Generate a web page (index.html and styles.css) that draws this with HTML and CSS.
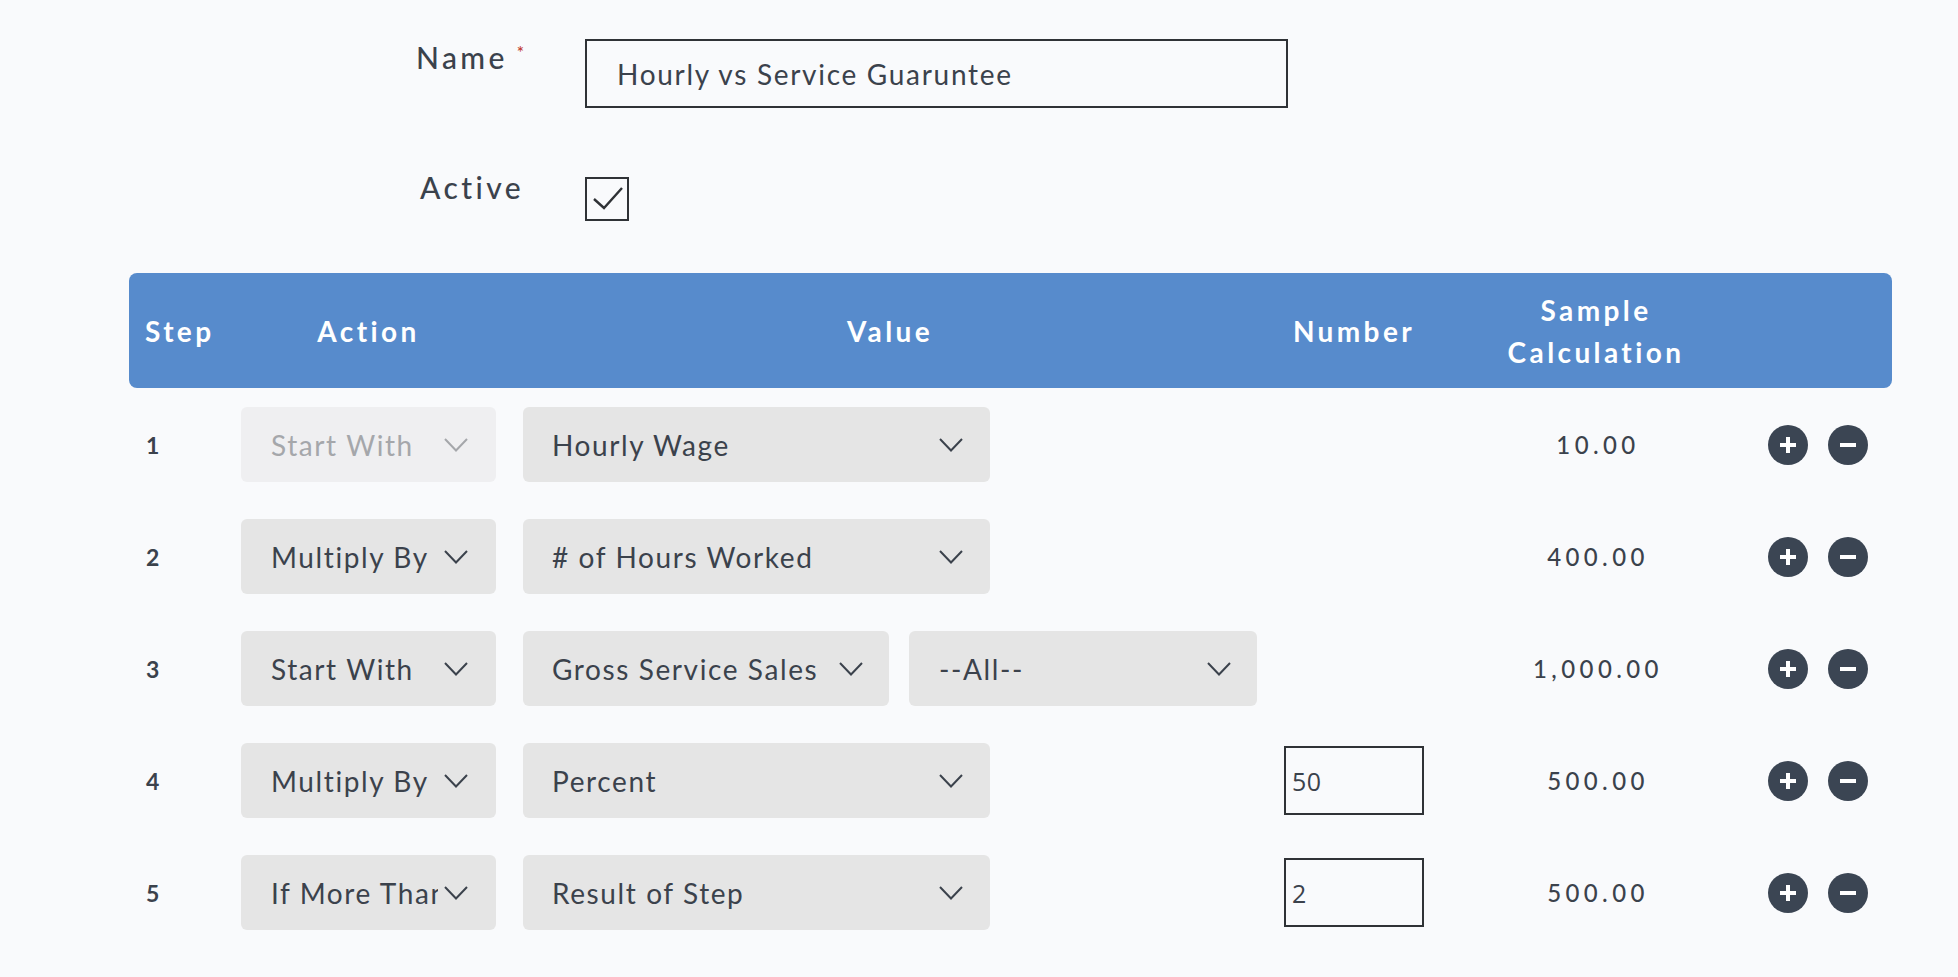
FILE: index.html
```html
<!DOCTYPE html>
<html lang="en">
<head>
<meta charset="utf-8">
<title>Pay Rule</title>
<link rel="stylesheet" href="styles.css">
</head>
<body>
<main class="page">
  <section class="form-fields">
    <div class="field">
      <div class="field-label">Name<span class="req">*</span></div>
      <div class="text-input">Hourly vs Service Guaruntee</div>
    </div>
    <div class="field field-active">
      <div class="field-label">Active</div>
      <div class="checkbox">
        <svg viewBox="0 0 40 40" width="40" height="40"><path d="M7 20 L17 29 L35 9" fill="none" stroke="#2f3236" stroke-width="2.4"/></svg>
      </div>
    </div>
  </section>

  <section class="steps">
    <div class="steps-head">
      <div class="col-step">Step</div>
      <div class="col-center">Action</div>
      <div class="col-center">Value</div>
      <div class="col-center">Number</div>
      <div class="col-center">Sample<br>Calculation</div>
      <div></div>
    </div>

    <div class="steps-body">
      <div class="step-row">
        <div class="step-num">1</div>
        <div class="select select-disabled"><span class="select-text">Start With</span><svg class="chev" viewBox="0 0 24 14"><path d="M1 1 L12 12.5 L23 1"/></svg></div>
        <div class="value-cell">
          <div class="select select-wide"><span class="select-text">Hourly Wage</span><svg class="chev" viewBox="0 0 24 14"><path d="M1 1 L12 12.5 L23 1"/></svg></div>
        </div>
        <div></div>
        <div class="sample">10.00</div>
        <div class="row-actions">
          <svg class="round-btn" viewBox="0 0 40 40"><circle cx="20" cy="20" r="20"/><rect x="12" y="18" width="16" height="4" fill="#fff"/><rect x="18" y="12" width="4" height="16" fill="#fff"/></svg>
          <svg class="round-btn" viewBox="0 0 40 40"><circle cx="20" cy="20" r="20"/><rect x="12" y="18" width="16" height="4" fill="#fff"/></svg>
        </div>
      </div>

      <div class="step-row">
        <div class="step-num">2</div>
        <div class="select"><span class="select-text">Multiply By</span><svg class="chev" viewBox="0 0 24 14"><path d="M1 1 L12 12.5 L23 1"/></svg></div>
        <div class="value-cell">
          <div class="select select-wide"><span class="select-text"># of Hours Worked</span><svg class="chev" viewBox="0 0 24 14"><path d="M1 1 L12 12.5 L23 1"/></svg></div>
        </div>
        <div></div>
        <div class="sample">400.00</div>
        <div class="row-actions">
          <svg class="round-btn" viewBox="0 0 40 40"><circle cx="20" cy="20" r="20"/><rect x="12" y="18" width="16" height="4" fill="#fff"/><rect x="18" y="12" width="4" height="16" fill="#fff"/></svg>
          <svg class="round-btn" viewBox="0 0 40 40"><circle cx="20" cy="20" r="20"/><rect x="12" y="18" width="16" height="4" fill="#fff"/></svg>
        </div>
      </div>

      <div class="step-row">
        <div class="step-num">3</div>
        <div class="select"><span class="select-text">Start With</span><svg class="chev" viewBox="0 0 24 14"><path d="M1 1 L12 12.5 L23 1"/></svg></div>
        <div class="value-cell">
          <div class="select select-half"><span class="select-text">Gross Service Sales</span><svg class="chev" viewBox="0 0 24 14"><path d="M1 1 L12 12.5 L23 1"/></svg></div>
          <div class="select select-filter"><span class="select-text">--All--</span><svg class="chev" viewBox="0 0 24 14"><path d="M1 1 L12 12.5 L23 1"/></svg></div>
        </div>
        <div></div>
        <div class="sample">1,000.00</div>
        <div class="row-actions">
          <svg class="round-btn" viewBox="0 0 40 40"><circle cx="20" cy="20" r="20"/><rect x="12" y="18" width="16" height="4" fill="#fff"/><rect x="18" y="12" width="4" height="16" fill="#fff"/></svg>
          <svg class="round-btn" viewBox="0 0 40 40"><circle cx="20" cy="20" r="20"/><rect x="12" y="18" width="16" height="4" fill="#fff"/></svg>
        </div>
      </div>

      <div class="step-row">
        <div class="step-num">4</div>
        <div class="select"><span class="select-text">Multiply By</span><svg class="chev" viewBox="0 0 24 14"><path d="M1 1 L12 12.5 L23 1"/></svg></div>
        <div class="value-cell">
          <div class="select select-wide"><span class="select-text">Percent</span><svg class="chev" viewBox="0 0 24 14"><path d="M1 1 L12 12.5 L23 1"/></svg></div>
        </div>
        <div class="num-input">50</div>
        <div class="sample">500.00</div>
        <div class="row-actions">
          <svg class="round-btn" viewBox="0 0 40 40"><circle cx="20" cy="20" r="20"/><rect x="12" y="18" width="16" height="4" fill="#fff"/><rect x="18" y="12" width="4" height="16" fill="#fff"/></svg>
          <svg class="round-btn" viewBox="0 0 40 40"><circle cx="20" cy="20" r="20"/><rect x="12" y="18" width="16" height="4" fill="#fff"/></svg>
        </div>
      </div>

      <div class="step-row">
        <div class="step-num">5</div>
        <div class="select"><span class="select-text">If More Than</span><svg class="chev" viewBox="0 0 24 14"><path d="M1 1 L12 12.5 L23 1"/></svg></div>
        <div class="value-cell">
          <div class="select select-wide"><span class="select-text">Result of Step</span><svg class="chev" viewBox="0 0 24 14"><path d="M1 1 L12 12.5 L23 1"/></svg></div>
        </div>
        <div class="num-input">2</div>
        <div class="sample">500.00</div>
        <div class="row-actions">
          <svg class="round-btn" viewBox="0 0 40 40"><circle cx="20" cy="20" r="20"/><rect x="12" y="18" width="16" height="4" fill="#fff"/><rect x="18" y="12" width="4" height="16" fill="#fff"/></svg>
          <svg class="round-btn" viewBox="0 0 40 40"><circle cx="20" cy="20" r="20"/><rect x="12" y="18" width="16" height="4" fill="#fff"/></svg>
        </div>
      </div>
    </div>
  </section>
</main>
</body>
</html>
```

FILE: styles.css
```css
html, body {
  margin: 0;
  background: #f9fafc;
}

body {
  font-family: Lato, "Open Sans", sans-serif;
  color: #3b424c;
}

/* ---------- top form ---------- */
.form-fields {
  padding-top: 38px;
}

.field {
  display: flex;
  align-items: flex-start;
}

.field-label {
  width: 524px;
  text-align: right;
  font-size: 30px;
  line-height: 34px;
  letter-spacing: 3.4px;
  font-weight: 500;
}

.field:first-child .field-label {
  padding-top: 2px;
}

.req {
  color: #c0392b;
  font-size: 17px;
  vertical-align: top;
  margin-left: 9px;
  line-height: 26px;
  letter-spacing: 0;
}

.text-input {
  margin-left: 61px;
  margin-top: 1px;
  width: 703px;
  height: 69px;
  box-sizing: border-box;
  border: 2px solid #2f3236;
  padding-left: 30px;
  display: flex;
  align-items: center;
  font-size: 28px;
  letter-spacing: 1.7px;
}

.field-active {
  margin-top: 62px;
}

.checkbox {
  margin-left: 61px;
  margin-top: 7px;
  width: 44px;
  height: 44px;
  box-sizing: border-box;
  border: 2px solid #2f3236;
}

.checkbox svg {
  display: block;
}

/* ---------- steps table ---------- */
.steps {
  margin: 52px 0 0 129px;
  width: 1763px;
}

.steps-head,
.step-row {
  display: grid;
  grid-template-columns: 85px 255px 734px 140px 290px 1fr;
  column-gap: 27px;
  align-items: center;
}

.steps-head {
  height: 115px;
  background: #578bcc;
  border-radius: 8px;
  color: #fff;
  font-size: 28px;
  font-weight: 700;
  letter-spacing: 3.4px;
  line-height: 42px;
}

.col-step {
  padding-left: 16px;
}

.col-center {
  text-align: center;
}

.steps-body {
  padding-top: 19px;
  display: flex;
  flex-direction: column;
  gap: 37px;
}

.step-row {
  height: 75px;
}

.step-num {
  padding-left: 17px;
  font-size: 23px;
  font-weight: 700;
  letter-spacing: 1px;
}

/* dropdowns */
.select {
  height: 75px;
  box-sizing: border-box;
  background: #e5e5e5;
  border-radius: 6px;
  padding: 0 28px 0 30px;
  display: flex;
  align-items: center;
  font-size: 28px;
  letter-spacing: 1.6px;
}

.select-text {
  flex: 1;
  min-width: 0;
  overflow: hidden;
  white-space: nowrap;
}

.chev {
  flex: none;
  width: 24px;
  height: 14px;
  margin-left: 6px;
  fill: none;
  stroke: #3b424c;
  stroke-width: 2;
}

.select-disabled {
  background: #efeff1;
  color: #a5a7ab;
}

.select-disabled .chev {
  stroke: #a5a7ab;
}

.value-cell {
  display: flex;
  gap: 20px;
}

.select-wide {
  width: 467px;
  padding-left: 29px;
  padding-right: 27px;
}

.select-half {
  width: 366px;
  padding-left: 29px;
  padding-right: 26px;
}

.select-filter {
  width: 348px;
  padding-left: 30px;
  padding-right: 26px;
}

.num-input {
  height: 69px;
  box-sizing: border-box;
  border: 2px solid #2f3236;
  padding-left: 6px;
  display: flex;
  align-items: center;
  font-family: "Open Sans", sans-serif;
  font-size: 25px;
  letter-spacing: 0.5px;
}

.sample {
  text-align: center;
  font-size: 24px;
  font-weight: 500;
  letter-spacing: 4.4px;
  padding-left: 4px;
}

.row-actions {
  display: flex;
  gap: 20px;
}

.round-btn {
  width: 40px;
  height: 40px;
  fill: #3b4553;
}
```
